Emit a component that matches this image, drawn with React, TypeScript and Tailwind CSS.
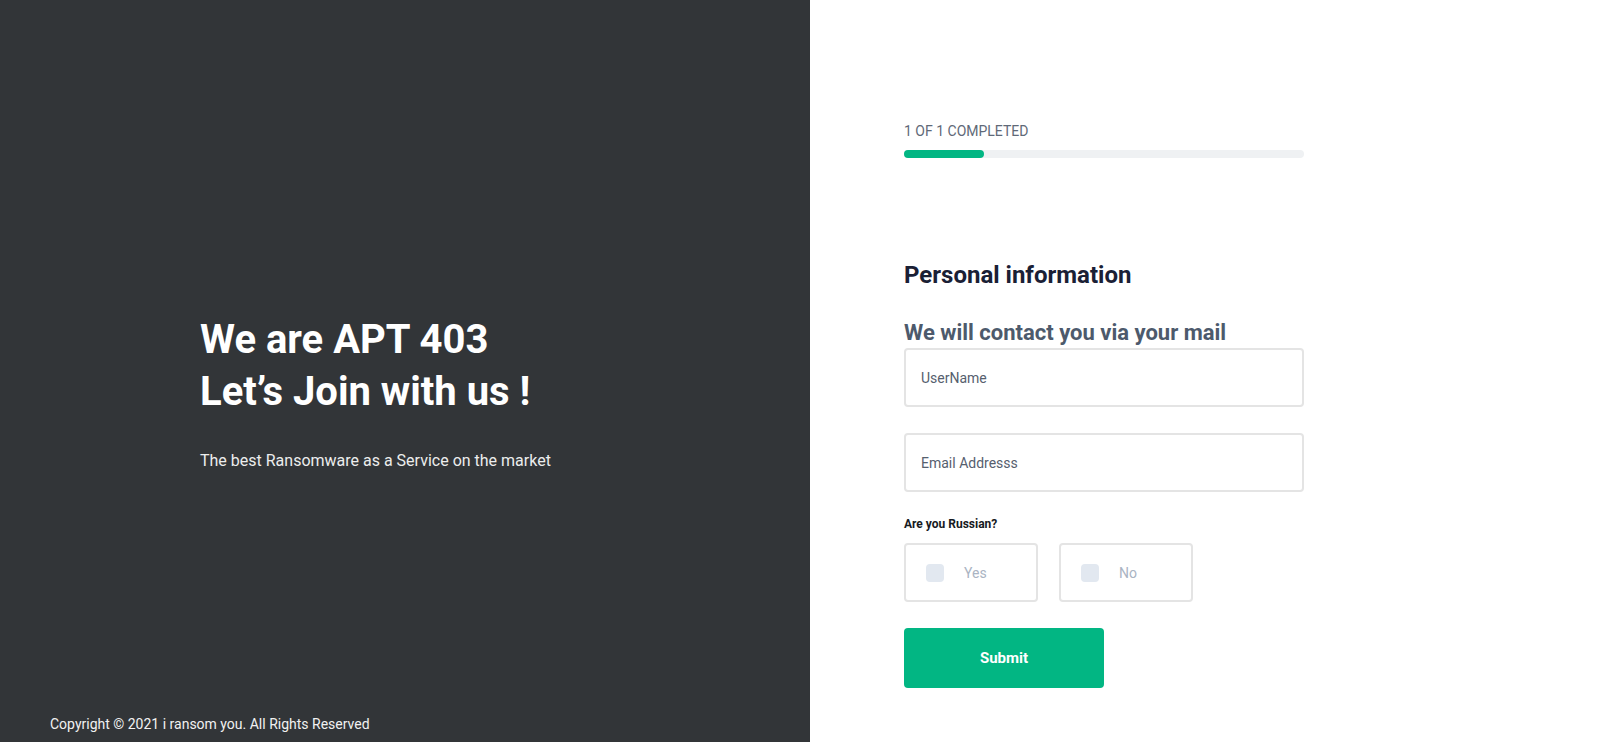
import React from "react"

const font = { fontFamily: "Roboto, 'Liberation Sans', sans-serif" }

function Choice({ label }: { label: string }) {
  return (
    <label className="flex items-center w-[134px] h-[59px] border-2 border-[#e4e4e4] rounded-[4px] pl-[20px] cursor-pointer">
      <span className="w-[18px] h-[18px] rounded-[4px] bg-[#e2e8f0]" />
      <span className="ml-[20px] mt-[1px] text-[14px] text-[#aab4c3]">{label}</span>
    </label>
  )
}

export default function App() {
  return (
    <div className="flex w-full h-[750px]" style={font}>
      {/* Left intro panel */}
      <div className="w-[810px] shrink-0 bg-[#323538] text-white flex flex-col">
        <div className="pt-[314px] pl-[200px]">
          <h1 className="text-[40px] leading-[52px] font-bold">
            We are APT 403
            <br />
            Let’s Join with us !
          </h1>
          <p className="mt-[31px] text-[16px] leading-[24px] text-[#eceded]">
            The best Ransomware as a Service on the market
          </p>
        </div>
        <div className="mt-auto pl-[50px] pb-[16px] text-[14px] leading-[20px] text-[#f1f1f1]">
          Copyright © 2021 i ransom you. All Rights Reserved
        </div>
      </div>

      {/* Right form panel */}
      <div className="flex-1 bg-white pl-[94px] pt-[121px]">
        <div className="w-[400px]">
          <div className="text-[14px] leading-[20px] text-[#5f6978] uppercase">1 of 1 completed</div>
          <div className="mt-[9px] h-[8px] rounded-full bg-[#eff1f3]">
            <div className="h-full w-[20%] rounded-full bg-[#02b683]" />
          </div>

          <h2 className="mt-[103px] text-[24px] leading-[28px] font-bold text-[#1a2035]">Personal information</h2>
          <h3 className="mt-[30px] text-[22px] leading-[28px] font-bold text-[#4d5a6c]">We will contact you via your mail</h3>

          <input
            placeholder="UserName"
            className="mt-[1px] block w-full h-[59px] border-2 border-[#e4e4e4] rounded-[4px] px-[15px] text-[14px] text-[#4a5568] placeholder:text-[#56606e] outline-none"
          />
          <input
            placeholder="Email Addresss"
            className="mt-[26px] block w-full h-[59px] border-2 border-[#e4e4e4] rounded-[4px] px-[15px] text-[14px] text-[#4a5568] placeholder:text-[#56606e] outline-none"
          />

          <div className="mt-[24px] text-[12px] leading-[16px] font-bold text-[#161a22]">Are you Russian?</div>
          <div className="mt-[11px] flex gap-[21px]">
            <Choice label="Yes" />
            <Choice label="No" />
          </div>

          <button className="mt-[26px] w-[200px] h-[60px] rounded-[4px] bg-[#02b683] text-white text-[15px] font-bold">
            Submit
          </button>
        </div>
      </div>
    </div>
  )
}
